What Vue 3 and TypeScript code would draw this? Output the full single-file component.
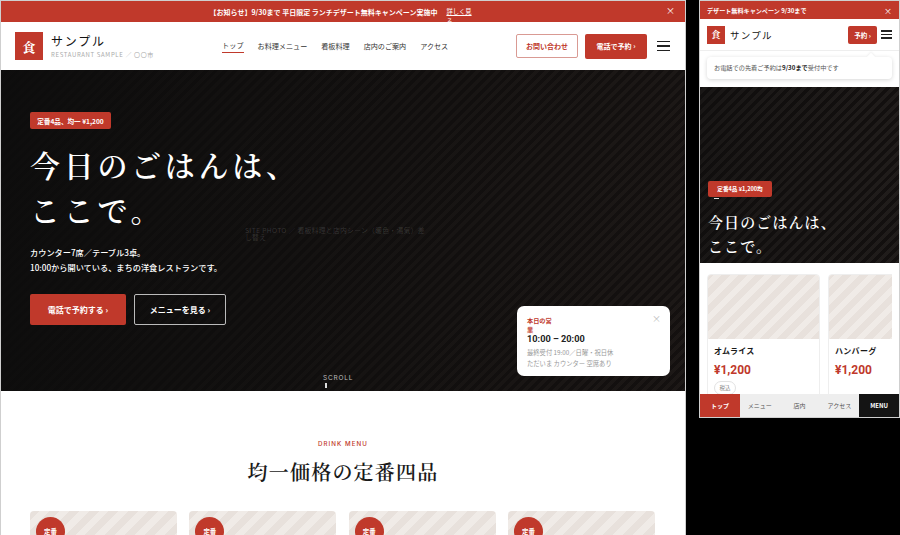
<script setup lang="ts">
const navItems: string[] = ['トップ', 'お料理メニュー', '看板料理', '店内のご案内', 'アクセス']
const cards: number[] = [1, 2, 3, 4]
const tabs: string[] = ['メニュー', '店内', 'アクセス']
const phoneCards: string[] = ['オムライス', 'ハンバーグ']
</script>

<template>
  <div class="stage">
    <div class="desktop">
      <div class="topbar">
        <span class="topmsg">【お知らせ】9/30まで 平日限定 ランチデザート無料キャンペーン実施中</span>
        <a class="toplink">詳しく見る</a>
        <span class="topclose">×</span>
      </div>
      <header class="header">
        <div class="brand">
          <div class="logo">食</div>
          <div class="brandtext">
            <div class="brandname">サンプル</div>
            <div class="brandsub">RESTAURANT SAMPLE ／ 〇〇市</div>
          </div>
        </div>
        <nav class="nav">
          <a v-for="(n, i) in navItems" :key="n" class="navitem" :class="{ active: i === 0 }">{{ n }}</a>
        </nav>
        <div class="actions">
          <a class="btn-outline">お問い合わせ</a>
          <a class="btn-red">電話で予約 ›</a>
          <div class="burger"><i></i><i></i><i></i></div>
        </div>
      </header>
      <section class="hero">
        <div class="badge">定番4品、均一 ¥1,200</div>
        <h1 class="title">今日のごはんは、<br />ここで。</h1>
        <p class="lead">カウンター7席／テーブル3卓。<br />10:00から開いている、まちの洋食レストランです。</p>
        <div class="cta">
          <a class="cta-red">電話で予約する ›</a>
          <a class="cta-line">メニューを見る ›</a>
        </div>
        <div class="photo">SITE PHOTO ／ 看板料理と店内シーン（暖色・湯気）差し替え</div>
        <div class="hours">
          <span class="hours-close">×</span>
          <div class="hours-label">本日の営業</div>
          <div class="hours-time">10:00 – 20:00</div>
          <div class="hours-note">最終受付 19:00／日曜・祝日休</div>
          <div class="hours-note">ただいま カウンター 空席あり</div>
        </div>
        <div class="scroll">SCROLL<i></i></div>
      </section>
      <section class="menu">
        <div class="eyebrow">DRINK MENU</div>
        <h2 class="menu-title">均一価格の定番四品</h2>
        <div class="grid">
          <div v-for="c in cards" :key="c" class="card">
            <div class="round">定番</div>
          </div>
        </div>
      </section>
    </div>

    <div class="phone">
      <div class="p-top">
        <span>デザート無料キャンペーン 9/30まで</span>
        <span class="p-close">×</span>
      </div>
      <div class="p-header">
        <div class="p-logo">食</div>
        <div class="p-name">サンプル</div>
        <a class="p-book">予約 ›</a>
        <div class="p-burger"><i></i><i></i><i></i></div>
      </div>
      <div class="p-notice-wrap">
        <div class="p-notice">お電話での先着ご予約は<b>9/30まで</b>受付中です</div>
      </div>
      <section class="p-hero">
        <div class="p-badge">定番4品 ¥1,200均</div>
        <div class="p-dash"></div>
        <h1 class="p-title">今日のごはんは、<br />ここで。</h1>
      </section>
      <section class="p-menu">
        <div v-for="c in phoneCards" :key="c" class="p-card">
          <div class="p-img"></div>
          <div class="p-body">
            <div class="p-item">{{ c }}</div>
            <div class="p-price">¥1,200</div>
            <div v-if="c === 'オムライス'" class="p-tax">税込</div>
          </div>
        </div>
      </section>
      <div class="p-tabs">
        <a class="tab tab-red">トップ</a>
        <a v-for="t in tabs" :key="t" class="tab">{{ t }}</a>
        <a class="tab tab-black">MENU</a>
      </div>
    </div>
  </div>
</template>

<style>
html, body { margin: 0; background: #000; }
</style>

<style scoped>
.stage {
  width: 900px;
  height: 535px;
  overflow: hidden;
  display: flex;
  background: #000;
  color: #1a1a1a;
  font-family: "Noto Sans CJK JP", "Noto Sans", sans-serif;
}
.desktop {
  width: 686px;
  height: 535px;
  flex: none;
  overflow: hidden;
  background: #fff;
  display: flex;
  flex-direction: column;
  box-sizing: border-box;
  border: 1px solid #cfcfcf;
  border-bottom: 0;
}
.topbar {
  height: 21px;
  flex: none;
  background: #c0392b;
  color: #fff;
  font-size: 7px;
  font-weight: 700;
  display: flex;
  align-items: flex-start;
  justify-content: center;
  gap: 9px;
  position: relative;
  line-height: 10px;
  padding: 6px 4px 0 0;
  box-sizing: border-box;
  overflow: hidden;
}
.toplink { width: 26px; font-size: 6.3px; text-decoration: underline; font-weight: 400; }
.topclose { position: absolute; right: 10px; top: 5px; font-weight: 400; font-size: 9px; }
.header {
  height: 48px;
  flex: none;
  display: flex;
  align-items: center;
  padding: 0 15px 0 14px;
  box-sizing: border-box;
}
.brand { display: flex; align-items: center; gap: 8px; width: 207px; }
.logo {
  width: 28px;
  height: 28px;
  background: #c0392b;
  color: #fff;
  display: flex;
  align-items: center;
  justify-content: center;
  font-size: 13px;
  font-weight: 700;
  font-family: "Noto Serif CJK JP", serif;
}
.brandname { font-size: 12px; letter-spacing: 1.8px; line-height: 15px; color: #111; }
.brandsub { font-size: 6px; letter-spacing: .65px; color: #aaa; line-height: 9px; margin-top: 2px; white-space: nowrap; }
.nav { display: flex; gap: 14px; align-items: center; }
.navitem { font-size: 7.1px; color: #333; line-height: 16px; white-space: nowrap; }
.navitem.active { line-height: 12px; border-bottom: 1px solid #c0392b; padding-bottom: 1px; letter-spacing: .1px; }
.actions { margin-left: auto; display: flex; align-items: center; }
.btn-outline, .btn-red {
  width: 62px;
  box-sizing: border-box;
  display: flex;
  align-items: center;
  justify-content: center;
  font-size: 7px;
  font-weight: 700;
  border-radius: 2px;
}
.btn-outline { height: 24px; border: 1px solid #d99a93; color: #c0392b; }
.btn-red { height: 25px; margin-left: 7px; background: #c0392b; color: #fff; }
.burger { width: 13px; margin-left: 10px; display: flex; flex-direction: column; gap: 3px; }
.burger i { display: block; height: 1.4px; background: #222; }
.hero {
  height: 321px;
  flex: none;
  position: relative;
  box-sizing: border-box;
  padding: 42px 29px 0;
  color: #fff;
  background:
    linear-gradient(90deg, rgba(12,12,12,.88), rgba(12,12,12,.55) 45%, rgba(12,12,12,.12)),
    repeating-linear-gradient(-45deg, #1f1a18 0 3.5px, #151110 3.5px 7px);
}
.badge {
  width: 81px;
  height: 17px;
  background: #c0392b;
  border-radius: 2px;
  font-size: 6.6px;
  font-weight: 700;
  display: flex;
  align-items: center;
  justify-content: center;
  white-space: nowrap;
}
.title {
  margin: 13px 0 0;
  font-family: "Noto Serif CJK JP", "Noto Sans CJK JP", serif;
  font-size: 30px;
  font-weight: 600;
  letter-spacing: 3.7px;
  line-height: 45px;
}
.lead { margin: 13px 0 0; font-size: 8.2px; line-height: 15px; font-weight: 500; }
.cta { display: flex; gap: 8px; margin-top: 19px; }
.cta-red, .cta-line {
  height: 31px;
  box-sizing: border-box;
  display: flex;
  align-items: center;
  justify-content: center;
  font-size: 8px;
  font-weight: 700;
  border-radius: 2px;
}
.cta-red { width: 96px; background: #c0392b; }
.cta-line { width: 92px; border: 1px solid #bbb; }
.photo {
  position: absolute;
  left: 244px;
  top: 157px;
  width: 186px;
  font-size: 6.8px;
  line-height: 7px;
  letter-spacing: .3px;
  color: rgba(255,255,255,.15);
}
.hours {
  position: absolute;
  left: 516px;
  top: 236px;
  width: 153px;
  height: 70px;
  box-sizing: border-box;
  padding: 10px 10px;
  background: #fff;
  border-radius: 7px;
  color: #222;
}
.hours-close { position: absolute; right: 9px; top: 6px; font-size: 9px; color: #bbb; }
.hours-label { width: 30px; font-size: 6.2px; line-height: 9px; font-weight: 700; color: #c0392b; }
.hours-time { font-size: 9.2px; line-height: 10px; font-weight: 700; font-family: Roboto, sans-serif; margin-bottom: 3px; }
.hours-note { font-size: 6.3px; line-height: 11px; color: #999; }
.scroll {
  position: absolute;
  left: 322px;
  top: 304px;
  font-size: 6.5px;
  line-height: 8px;
  letter-spacing: .8px;
  color: #bbb;
  font-family: Inter, sans-serif;
}
.scroll i { display: block; width: 1.5px; height: 5px; background: #ddd; margin: 1px 0 0 2px; }
.menu { flex: 1; padding: 48px 29px 0; text-align: center; }
.eyebrow {
  font-family: Inter, sans-serif;
  font-size: 6.2px;
  line-height: 10px;
  letter-spacing: 1.05px;
  font-weight: 500;
  color: #c0392b;
}
.menu-title {
  margin: 10px 0 0;
  font-family: "Noto Serif CJK JP", "Noto Sans CJK JP", serif;
  font-size: 20px;
  line-height: 26px;
  font-weight: 600;
  letter-spacing: 1.2px;
}
.grid { width: 626px; display: grid; grid-template-columns: repeat(4, 147px); gap: 12.33px; margin-top: 26px; }
.card {
  height: 120px;
  padding: 6px 6px;
  box-sizing: border-box;
  border-radius: 4px;
  background: repeating-linear-gradient(-45deg, #e8e1dc 0 7px, #f0ebe7 7px 14px);
}
.round {
  width: 29px;
  height: 29px;
  border-radius: 50%;
  background: #c0392b;
  color: #fff;
  font-size: 6.4px;
  font-weight: 700;
  display: flex;
  align-items: center;
  justify-content: center;
}
.phone {
  width: 201px;
  height: 418px;
  margin-left: 13px;
  flex: none;
  position: relative;
  overflow: hidden;
  background: #fff;
  box-sizing: border-box;
  border: 1px solid #cfcfcf;
}
.p-top {
  height: 18px;
  background: #c0392b;
  color: #fff;
  font-size: 6.1px;
  font-weight: 700;
  display: flex;
  align-items: center;
  justify-content: space-between;
  padding: 0 7px;
}
.p-close { font-size: 8px; font-weight: 400; }
.p-header {
  height: 31px;
  display: flex;
  align-items: center;
  padding: 0 7px 0 7px;
  border-bottom: 1px solid #eee;
}
.p-logo {
  width: 18px;
  height: 18px;
  background: #c0392b;
  color: #fff;
  font-size: 9px;
  font-weight: 700;
  font-family: "Noto Serif CJK JP", serif;
  display: flex;
  align-items: center;
  justify-content: center;
}
.p-name { margin-left: 5px; font-size: 9.5px; letter-spacing: 1.3px; color: #111; }
.p-book {
  margin-left: auto;
  width: 29px;
  height: 18px;
  background: #c0392b;
  color: #fff;
  border-radius: 2px;
  font-size: 6.5px;
  font-weight: 700;
  display: flex;
  align-items: center;
  justify-content: center;
}
.p-burger { width: 11px; margin-left: 4px; display: flex; flex-direction: column; gap: 2.4px; }
.p-burger i { display: block; height: 1.2px; background: #222; }
.p-notice-wrap { height: 36px; box-sizing: border-box; padding: 6px 7px 0; }
.p-notice {
  height: 22px;
  box-sizing: border-box;
  padding: 0 7px;
  border-radius: 4px;
  box-shadow: 0 1px 4px rgba(0,0,0,.16);
  font-size: 6.2px;
  line-height: 22px;
  color: #555;
  white-space: nowrap;
  position: relative;
  background: #fff;
}
.p-notice::before {
  content: "";
  position: absolute;
  top: -3px;
  right: 18px;
  width: 6px;
  height: 6px;
  background: #fff;
  transform: rotate(45deg);
  box-shadow: -1px -1px 2px rgba(0,0,0,.05);
}
.p-notice b { color: #222; }
.p-hero {
  height: 176px;
  box-sizing: border-box;
  padding: 94px 8px 0;
  color: #fff;
  background:
    linear-gradient(90deg, rgba(12,12,12,.5), rgba(12,12,12,.25)),
    repeating-linear-gradient(-45deg, #272220 0 3.5px, #151110 3.5px 7px);
}
.p-badge {
  width: 64px;
  height: 16px;
  background: #c0392b;
  border-radius: 2px;
  font-size: 5.6px;
  font-weight: 700;
  display: flex;
  align-items: center;
  justify-content: center;
  white-space: nowrap;
}
.p-dash { width: 5px; height: 1px; margin: 1px 0 0 6px; background: #ddd; }
.p-title {
  margin: 11px 0 0;
  font-family: "Noto Serif CJK JP", "Noto Sans CJK JP", serif;
  font-size: 15px;
  line-height: 24px;
  font-weight: 600;
  letter-spacing: 1.1px;
}
.p-menu {
  display: flex;
  gap: 8px;
  padding: 11px 0 0 7px;
  width: 192px;
  box-sizing: border-box;
  overflow: hidden;
}
.p-card {
  width: 113px;
  height: 140px;
  flex: none;
  box-sizing: border-box;
  border: 1px solid #eee;
  border-radius: 4px;
  overflow: hidden;
}
.p-img {
  height: 64px;
  background: repeating-linear-gradient(-45deg, #e8e1dc 0 6px, #f0ebe7 6px 12px);
}
.p-body { padding: 6px 6px; }
.p-item { font-size: 8px; font-weight: 700; line-height: 12px; letter-spacing: .3px; }
.p-price { font-size: 12px; font-weight: 700; line-height: 16px; margin-top: 5px; color: #c0392b; font-family: Roboto, sans-serif; }
.p-tax {
  width: 22px;
  height: 14px;
  margin-top: 3px;
  border: 1px solid #e2e2e2;
  border-radius: 7px;
  box-sizing: border-box;
  font-size: 5.5px;
  line-height: 12px;
  text-align: center;
  color: #888;
}
.p-tabs {
  position: absolute;
  left: 0;
  bottom: 0;
  width: 100%;
  height: 23px;
  display: grid;
  grid-template-columns: repeat(5, 1fr);
  background: #eee;
}
.tab {
  display: flex;
  align-items: center;
  justify-content: center;
  font-size: 6px;
  color: #555;
}
.tab-red { background: #c0392b; color: #fff; font-weight: 700; }
.tab-black { background: #141414; color: #fff; font-weight: 700; }
</style>
